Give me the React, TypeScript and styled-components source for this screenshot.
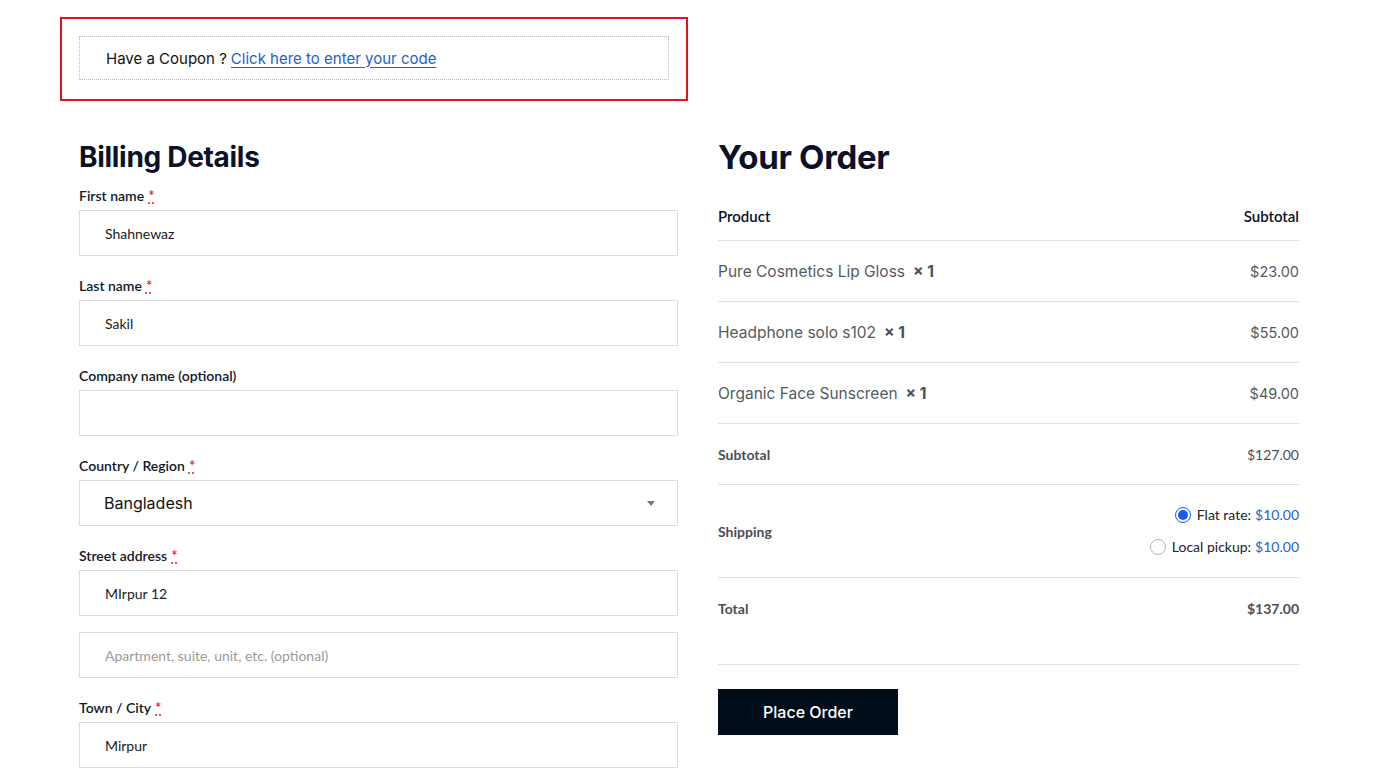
import React from 'react';
import styled, { createGlobalStyle } from 'styled-components';

const GlobalStyle = createGlobalStyle`
  * {
    box-sizing: border-box;
  }
  body {
    margin: 0;
    background: #ffffff;
    font-family: 'Lato', 'Noto Sans', sans-serif;
    color: #0a1128;
  }
`;

const Page = styled.div`
  padding: 17px 87px 0 60px;
`;

const CouponFrame = styled.div`
  width: 628px;
  border: 2px solid #e3131b;
  padding: 17px 17px 19px 17px;
`;

const CouponBox = styled.div`
  height: 44px;
  border: 1px dotted #b8b8b8;
  display: flex;
  align-items: center;
  padding-left: 26px;
  font-family: 'Inter', 'Liberation Sans', sans-serif;
  font-size: 15px;
  color: #111;
`;

const CouponLink = styled.a`
  color: #2261d4;
  text-decoration: underline;
  text-underline-offset: 3px;
  margin-left: 4px;
  cursor: pointer;
`;

const Columns = styled.div`
  display: grid;
  grid-template-columns: 599px 581px;
  column-gap: 40px;
  margin-left: 19px;
  margin-top: 35px;
`;

const Column = styled.div`
  display: flex;
  flex-direction: column;
`;

const Heading = styled.h2<{ size: number }>`
  margin: 0;
  padding-top: 3px;
  font-family: 'Inter', 'Noto Sans', sans-serif;
  font-weight: 700;
  font-size: ${p => p.size}px;
  line-height: 36px;
  letter-spacing: -0.3px;
  color: #0a1128;
`;

const Field = styled.div<{ gap?: number }>`
  display: flex;
  flex-direction: column;
  margin-top: ${p => (p.gap ?? 20)}px;
`;

const Label = styled.label`
  display: block;
  height: 20px;
  font-size: 14px;
  font-weight: 600;
  line-height: 20px;
  color: #111827;
  margin-bottom: 4px;
`;

const Required = styled.abbr`
  color: #e2231a;
  font-size: 15px;
  line-height: 14px;
  margin-left: 4px;
  text-decoration: underline dotted;
  text-underline-offset: 2px;
`;

const Input = styled.input`
  height: 46px;
  width: 100%;
  border: 1px solid #dddddd;
  padding: 0 25px;
  font-family: 'Lato', 'Noto Sans', sans-serif;
  font-size: 14px;
  color: #1a1a1a;
  outline: none;
  &::placeholder {
    color: #9a9a9a;
  }
`;

const Select = styled.div`
  height: 46px;
  border: 1px solid #dddddd;
  display: flex;
  align-items: center;
  justify-content: space-between;
  padding: 0 22px 0 24px;
  font-family: 'Inter', 'Noto Sans', sans-serif;
  font-size: 16px;
  color: #111;
`;

const Caret = styled.span`
  width: 0;
  height: 0;
  border-left: 4.5px solid transparent;
  border-right: 4.5px solid transparent;
  border-top: 5px solid #777;
`;

const OrderTable = styled.div`
  display: flex;
  flex-direction: column;
  margin-top: 17px;
`;

const Row = styled.div<{ h: number; line?: boolean }>`
  display: flex;
  justify-content: space-between;
  align-items: center;
  height: ${p => p.h}px;
  border-bottom: ${p => (p.line === false ? 'none' : '1px solid #e2e2e2')};
`;

const HeadCell = styled.span`
  font-size: 15px;
  font-weight: 600;
  color: #0a1128;
`;

const ItemName = styled.span`
  font-family: 'Inter', 'Noto Sans', sans-serif;
  font-size: 15.5px;
  color: #555a60;
`;

const Qty = styled.strong`
  font-weight: 700;
  margin-left: 8px;
  color: #4a4f55;
`;

const Price = styled.span`
  font-family: 'Inter', 'Noto Sans', sans-serif;
  font-size: 14.5px;
  color: #555a60;
`;

const SumLabel = styled.span`
  font-size: 14px;
  font-weight: 700;
  color: #4a4f55;
`;

const SumValue = styled.span<{ bold?: boolean }>`
  font-size: 14px;
  font-weight: ${p => (p.bold ? 700 : 400)};
  color: #4a4f55;
`;

const Options = styled.div`
  display: flex;
  flex-direction: column;
  align-items: flex-end;
  gap: 14px;
`;

const Option = styled.div`
  display: flex;
  align-items: center;
  font-size: 14px;
  line-height: 18px;
  color: #222;
`;

const Radio = styled.span<{ checked?: boolean }>`
  width: 16px;
  height: 16px;
  border-radius: 50%;
  border: 1px solid ${p => (p.checked ? '#1a5cf0' : '#b5b5b5')};
  margin-right: 6px;
  display: flex;
  align-items: center;
  justify-content: center;
  &::after {
    content: '';
    width: 10px;
    height: 10px;
    border-radius: 50%;
    background: ${p => (p.checked ? '#1a5cf0' : 'transparent')};
  }
`;

const Amount = styled.span`
  color: #2261d4;
  margin-left: 4px;
`;

const Divider = styled.div`
  height: 1px;
  background: #e2e2e2;
  margin-top: 26px;
`;

const PlaceOrder = styled.button`
  width: 180px;
  height: 46px;
  margin-top: 24px;
  border: none;
  background: #020d1a;
  color: #ffffff;
  font-family: 'Inter', 'Noto Sans', sans-serif;
  font-size: 16px;
  font-weight: 500;
  cursor: pointer;
`;

const items = [
  { name: 'Pure Cosmetics Lip Gloss', price: '$23.00' },
  { name: 'Headphone solo s102', price: '$55.00' },
  { name: 'Organic Face Sunscreen', price: '$49.00' },
];

const App: React.FC = () => {
  return (
    <Page>
      <GlobalStyle />
      <CouponFrame>
        <CouponBox>
          Have a Coupon ?<CouponLink>Click here to enter your code</CouponLink>
        </CouponBox>
      </CouponFrame>

      <Columns>
        <Column>
          <Heading size={28}>Billing Details</Heading>
          <Field gap={11}>
            <Label>First name<Required>*</Required></Label>
            <Input defaultValue="Shahnewaz" />
          </Field>
          <Field>
            <Label>Last name<Required>*</Required></Label>
            <Input defaultValue="Sakil" />
          </Field>
          <Field>
            <Label>Company name (optional)</Label>
            <Input />
          </Field>
          <Field>
            <Label>Country / Region<Required>*</Required></Label>
            <Select>
              Bangladesh
              <Caret />
            </Select>
          </Field>
          <Field>
            <Label>Street address<Required>*</Required></Label>
            <Input defaultValue="MIrpur 12" />
          </Field>
          <Field gap={16}>
            <Input placeholder="Apartment, suite, unit, etc. (optional)" />
          </Field>
          <Field>
            <Label>Town / City<Required>*</Required></Label>
            <Input defaultValue="Mirpur" />
          </Field>
        </Column>

        <Column>
          <Heading size={33}>Your Order</Heading>
          <OrderTable>
            <Row h={49}>
              <HeadCell>Product</HeadCell>
              <HeadCell>Subtotal</HeadCell>
            </Row>
            {items.map(item => (
              <Row h={61} key={item.name}>
                <ItemName>
                  {item.name}
                  <Qty>× 1</Qty>
                </ItemName>
                <Price>{item.price}</Price>
              </Row>
            ))}
            <Row h={61}>
              <SumLabel>Subtotal</SumLabel>
              <SumValue>$127.00</SumValue>
            </Row>
            <Row h={93}>
              <SumLabel>Shipping</SumLabel>
              <Options>
                <Option>
                  <Radio checked />
                  Flat rate:<Amount>$10.00</Amount>
                </Option>
                <Option>
                  <Radio />
                  Local pickup:<Amount>$10.00</Amount>
                </Option>
              </Options>
            </Row>
            <Row h={60} line={false}>
              <SumLabel>Total</SumLabel>
              <SumValue bold>$137.00</SumValue>
            </Row>
          </OrderTable>
          <Divider />
          <div>
            <PlaceOrder>Place Order</PlaceOrder>
          </div>
        </Column>
      </Columns>
    </Page>
  );
};

export default App;
